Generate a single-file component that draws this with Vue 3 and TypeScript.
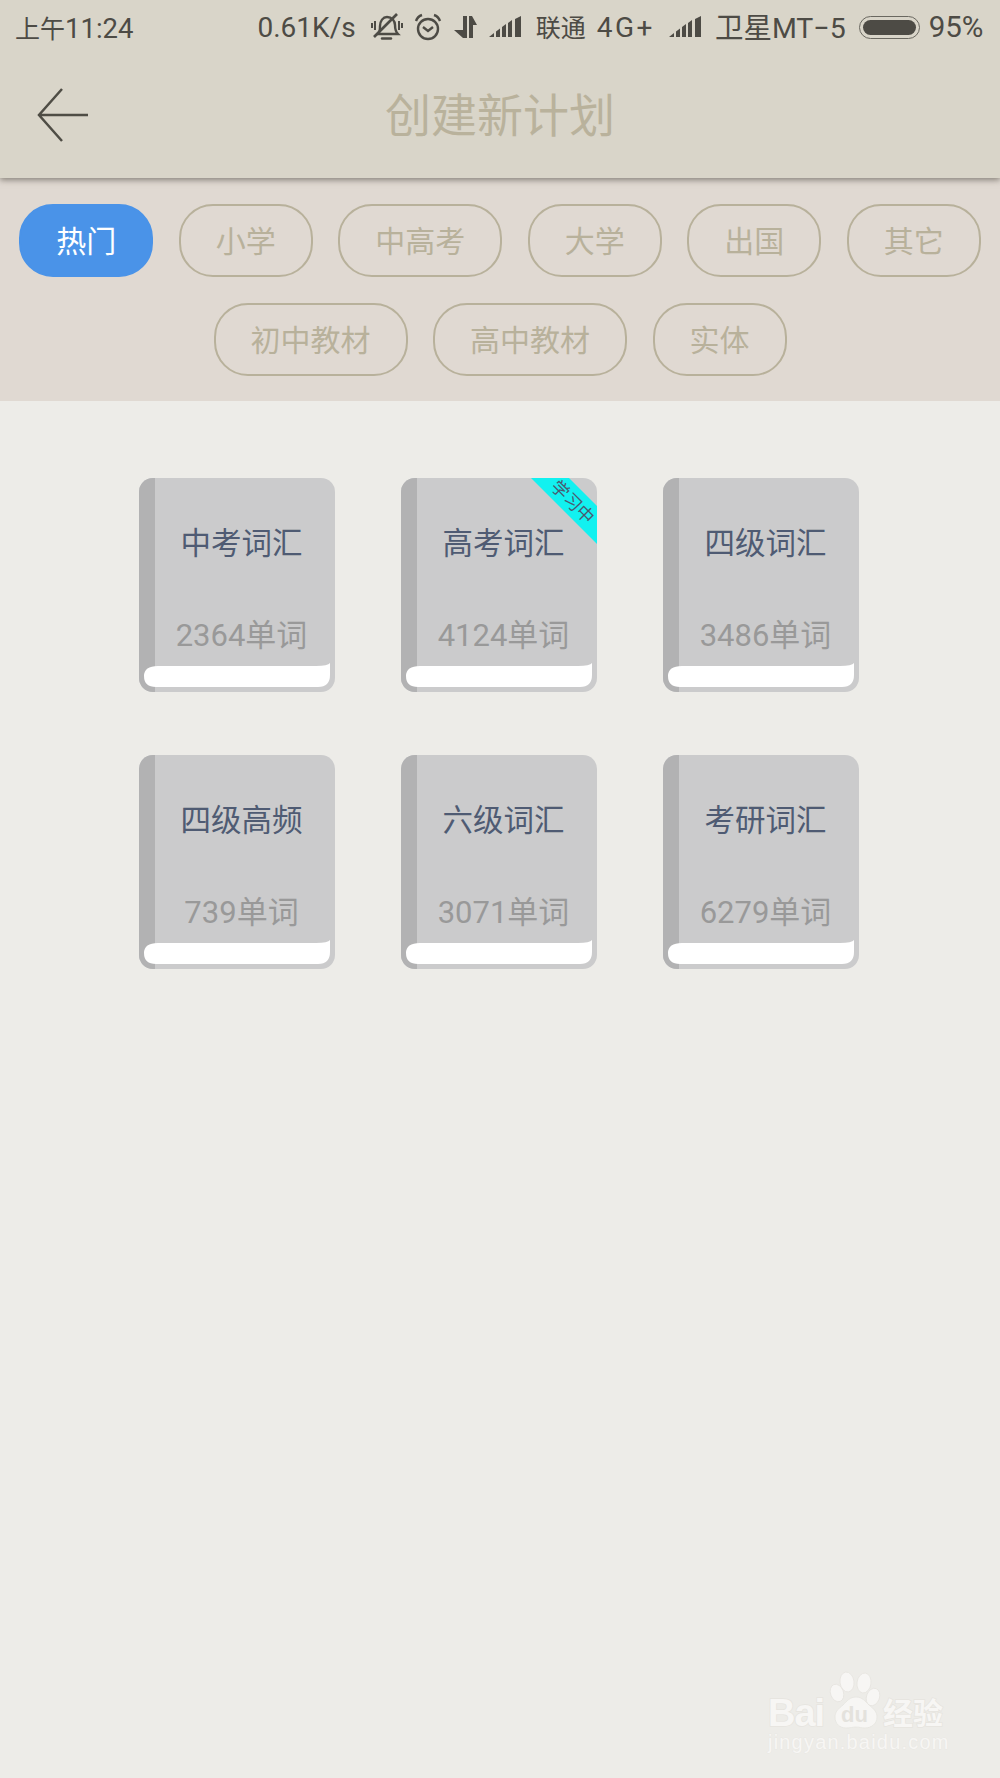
<template>
  <div class="page">
    <header class="header">
      <div class="status">
        <span class="status__time"><span class="status__ampm">上午</span>11:24</span>
        <span class="status__speed">0.61K/s</span>
        <svg class="ic ic--bell" width="32" height="28" viewBox="0 0 32 28" fill="none" stroke="#4d4b45" stroke-width="2.400">
          <path d="M7 21c2-2 2-5 2-8 0-5 3-9 7-9 5 0 8 4 8 8 0 4 1 7 3 9z" />
          <path d="M11 25.500h9" stroke-linecap="round" />
          <path d="M3 24 26 1" stroke-width="2.600" />
          <path d="M4 8v9M28 8v9M1 10v5M31 10v5" stroke-width="2" />
        </svg>
        <svg class="ic ic--alarm" width="28" height="28" viewBox="0 0 28 28" fill="none" stroke="#4d4b45" stroke-width="2.400">
          <circle cx="14" cy="16" r="10" />
          <path d="M9 14l5 4 5-4" />
          <path d="M2 8c1-3 3-5 6-6M26 8c-1-3-3-5-6-6" />
        </svg>
        <svg class="ic ic--data" width="24" height="24" viewBox="0 0 24 24" fill="#4d4b45">
          <path d="M10 1h4v22h-4l-9-8h9z" />
          <path d="M16 1h3l5 9h-4v13h-4z" />
        </svg>
        <svg class="ic ic--sig" width="32" height="22" viewBox="0 0 32 22" fill="#4d4b45">
          <path d="M0 21l5-4v4zM7 15.500l4-3V21H7zM13 11l4-3v13h-4zM19 7l4-3v17h-4zM26 3l6-3v21h-6z" />
        </svg>
        <span class="status__carrier">联通</span>
        <span class="status__net">4G+</span>
        <svg class="ic ic--sig2" width="32" height="22" viewBox="0 0 32 22" fill="#4d4b45">
          <path d="M0 21l5-4v4zM7 15.500l4-3V21H7zM13 11l4-3v13h-4zM19 7l4-3v17h-4zM26 3l6-3v21h-6z" />
        </svg>
        <span class="status__carrier2">卫星MT−5</span>
        <div class="battery"><div class="battery__fill"></div></div>
        <span class="status__pct">95%</span>
      </div>
      <div class="toolbar">
        <svg class="toolbar__back" width="52" height="56" viewBox="0 0 52 56" fill="none" stroke="#4f4d45" stroke-width="2.500">
          <path d="M25 2 2 28l23 26M2 28h49" />
        </svg>
        <h1 class="toolbar__title">创建新计划</h1>
        <span></span>
      </div>
    </header>

    <nav class="tabs">
      <button
        v-for="tab in tabs"
        :key="tab"
        class="chip"
        :class="{ 'chip--active': tab === activeTab }"
        @click="activeTab = tab"
      >
        {{ tab }}
      </button>
    </nav>

    <main class="shelf">
      <article v-for="book in books" :key="book.title" class="book">
        <div class="book__spine"></div>
        <div class="book__cover">
          <div class="book__title">{{ book.title }}</div>
          <div class="book__count">{{ book.count }}单词</div>
        </div>
        <svg class="book__page" width="186" height="24" viewBox="0 0 186 24">
          <path d="M14 3H172Q184 3 186 0V12Q186 24 174 24H12Q0 24 0 13Q0 3 14 3Z" fill="#fff" />
        </svg>
        <div v-if="book.learning" class="book__ribbon">
          <span class="book__ribbon-text">学习中</span>
        </div>
      </article>
    </main>

    <svg class="watermark" width="230" height="110" viewBox="0 0 230 110">
      <g fill="#f7f6f4" stroke="#e6e4df" stroke-width="0.800">
        <ellipse cx="107" cy="32" rx="7" ry="10" transform="rotate(-8 107 32)" />
        <ellipse cx="124" cy="33" rx="7" ry="10" transform="rotate(8 124 33)" />
        <ellipse cx="97" cy="43" rx="6.500" ry="9" transform="rotate(-20 97 43)" />
        <ellipse cx="133" cy="47" rx="6.500" ry="9" transform="rotate(20 133 47)" />
        <path d="M116 47c6 0 9 4 13 8 5 4 8 7 8 12 0 7-6 11-12 11-4 0-6-1-9-1s-6 1-10 1c-6 0-11-4-11-11 0-5 3-8 8-12 4-4 7-8 13-8z" />
      </g>
      <text x="28" y="76" class="wm-big">Bai</text>
      <text x="101" y="72" class="wm-du">du</text>
      <text x="143" y="74" class="wm-cn">经验</text>
      <text x="28" y="99" class="wm-url">jingyan.baidu.com</text>
    </svg>
  </div>
</template>

<script setup lang="ts">
import { ref } from 'vue';

interface Book {
  title: string;
  count: number;
  learning?: boolean;
}

const tabs = ['热门', '小学', '中高考', '大学', '出国', '其它', '初中教材', '高中教材', '实体'];
const activeTab = ref('热门');

const books: Book[] = [
  { title: '中考词汇', count: 2364 },
  { title: '高考词汇', count: 4124, learning: true },
  { title: '四级词汇', count: 3486 },
  { title: '四级高频', count: 739 },
  { title: '六级词汇', count: 3071 },
  { title: '考研词汇', count: 6279 }
];
</script>

<style>
html,
body {
  margin: 0;
  background: #edece8;
}
</style>

<style scoped>
.page {
  position: relative;
  width: 1000px;
  height: 1778px;
  overflow: hidden;
  background: #edece8;
  font-family: Roboto, "Noto Sans CJK SC", sans-serif;
}

.header {
  position: relative;
  z-index: 1;
  height: 178px;
  background: #d9d5c9;
  box-shadow: 0 2px 6px rgba(60, 55, 45, 0.55);
}

.status {
  display: flex;
  align-items: center;
  height: 54px;
  padding-left: 15px;
  color: #4d4b45;
  font-size: 28px;
  white-space: nowrap;
}

.status__time {
  margin-top: -1px;
  font-size: 27.500px;
}

.status__ampm {
  font-size: 25px;
}

.status__speed {
  margin-left: 124px;
}

.ic {
  flex: none;
}

.ic--bell {
  margin-left: 15px;
}

.ic--alarm {
  margin-left: 11px;
}

.ic--data {
  margin-left: 11px;
}

.ic--sig {
  margin-left: 12px;
}

.status__carrier {
  margin-top: -3px;
  margin-left: 15px;
  font-size: 25px;
}

.status__net {
  margin-left: 11px;
  font-size: 28px;
  letter-spacing: 2.500px;
}

.ic--sig2 {
  margin-left: 14px;
}

.status__carrier2 {
  margin-top: -4px;
  margin-left: 14px;
  font-size: 28.500px;
}

.battery {
  flex: none;
  box-sizing: border-box;
  width: 61px;
  height: 23px;
  margin-left: 13px;
  padding: 3px;
  border: 1.500px solid #6a6860;
  border-radius: 12px;
}

.battery__fill {
  height: 100%;
  background: #4d4b45;
  border-radius: 8px;
}

.status__pct {
  margin-left: 9px;
  font-size: 29.500px;
}

.toolbar {
  display: grid;
  grid-template-columns: 1fr auto 1fr;
  align-items: center;
  height: 124px;
  padding-left: 37px;
  padding-right: 37px;
}

.toolbar__back {
  display: block;
  margin-top: -3px;
}

.toolbar__title {
  margin: 0;
  color: #b9b29c;
  font-size: 46px;
  font-weight: 400;
  line-height: 60px;
}

.tabs {
  display: flex;
  flex-wrap: wrap;
  justify-content: center;
  align-content: flex-start;
  gap: 26px 25.500px;
  box-sizing: border-box;
  height: 223px;
  padding: 26px 10px 0;
  background: #e0d9d2;
}

.chip {
  box-sizing: border-box;
  height: 73px;
  padding: 3px 35px 0;
  border: 2px solid #b8b19b;
  border-radius: 34px;
  background: transparent;
  color: #b8b19b;
  font-family: inherit;
  font-size: 30px;
  line-height: 1;
}

.chip--active {
  border-color: #4a93e8;
  background: #4a93e8;
  color: #fff;
}

.shelf {
  display: grid;
  grid-template-columns: repeat(3, 196px);
  justify-content: center;
  column-gap: 66px;
  row-gap: 63px;
  padding: 77px 2px 0 0;
}

.book {
  position: relative;
  display: flex;
  height: 214px;
  overflow: hidden;
  background: #cbcbcc;
  border-radius: 14px;
}

.book__spine {
  flex: none;
  width: 16px;
  background: #b2b2b3;
}

.book__cover {
  flex: 1;
  padding: 48px 7px 0 0;
  text-align: center;
  line-height: 36px;
  white-space: nowrap;
}

.book__title {
  color: #4f5b73;
  font-size: 30.500px;
}

.book__count {
  margin-top: 56px;
  color: #999;
  font-size: 31px;
}

.book__page {
  position: absolute;
  left: 5px;
  bottom: 5px;
}

.book__ribbon {
  position: absolute;
  top: 0;
  right: 0;
  width: 66px;
  height: 66px;
  background: #12f1f0;
  clip-path: polygon(0 0, 38px 0, 66px 28px, 66px 66px);
}

.book__ribbon-text {
  position: absolute;
  left: 15px;
  top: 16px;
  color: #4a5a70;
  font-size: 17.500px;
  line-height: 17px;
  white-space: nowrap;
  transform: rotate(45deg);
}

.watermark {
  position: absolute;
  right: 30px;
  bottom: 18px;
}

.watermark text {
  fill: #f7f6f4;
  paint-order: stroke;
  stroke: #e6e4df;
  stroke-width: 1.500px;
  font-family: "Liberation Sans", sans-serif;
}

.watermark .wm-big {
  font-size: 38px;
  font-weight: 700;
  letter-spacing: -1px;
}

.watermark .wm-du {
  font-size: 22px;
  font-weight: 700;
  fill: #e4e2dd;
  stroke: none;
}

.watermark .wm-cn {
  font-family: "Noto Sans CJK SC", sans-serif;
  font-size: 30px;
  font-weight: 700;
}

.watermark .wm-url {
  font-size: 20px;
  letter-spacing: 1.200px;
  stroke-width: 0.500px;
}
</style>
